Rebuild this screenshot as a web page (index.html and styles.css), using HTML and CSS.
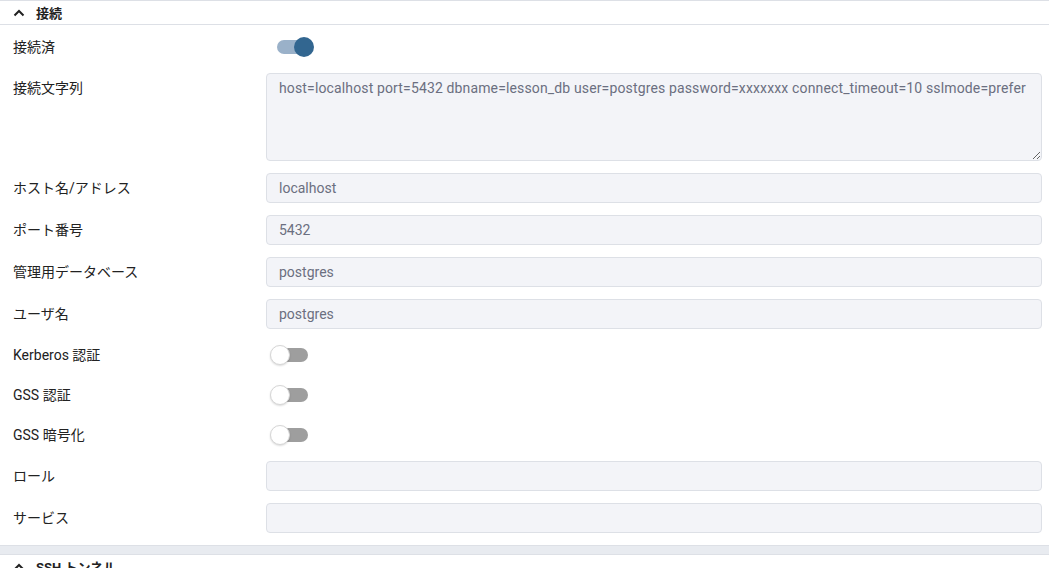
FILE: index.html
```html
<!DOCTYPE html>
<html lang="ja">
<head>
    <meta charset="UTF-8">
    <meta name="viewport" content="width=device-width, initial-scale=1.0">
    <title>接続</title>
    <link rel="stylesheet" href="styles.css">
</head>
<body>
    <!-- 接続 section -->
    <div class="section">
        <div class="section-header">
            <svg class="chevron" width="12" height="8" viewBox="0 0 12 8"><polyline points="1.5,6.5 6,2 10.5,6.5" fill="none" stroke="#222" stroke-width="2"/></svg>
            <span>接続</span>
        </div>

        <div class="form">
            <div class="row row-toggle">
                <label class="label">接続済</label>
                <div class="switch on"><span class="track"></span><span class="knob"></span></div>
            </div>

            <div class="row">
                <label class="label">接続文字列</label>
                <textarea class="field area" readonly>host=localhost port=5432 dbname=lesson_db user=postgres password=xxxxxxx connect_timeout=10 sslmode=prefer</textarea>
            </div>

            <div class="row">
                <label class="label">ホスト名/アドレス</label>
                <input class="field" type="text" value="localhost" readonly>
            </div>

            <div class="row">
                <label class="label">ポート番号</label>
                <input class="field" type="text" value="5432" readonly>
            </div>

            <div class="row">
                <label class="label">管理用データベース</label>
                <input class="field" type="text" value="postgres" readonly>
            </div>

            <div class="row">
                <label class="label">ユーザ名</label>
                <input class="field" type="text" value="postgres" readonly>
            </div>

            <div class="row row-toggle">
                <label class="label">Kerberos 認証</label>
                <div class="switch"><span class="track"></span><span class="knob"></span></div>
            </div>

            <div class="row row-toggle">
                <label class="label">GSS 認証</label>
                <div class="switch"><span class="track"></span><span class="knob"></span></div>
            </div>

            <div class="row row-toggle">
                <label class="label">GSS 暗号化</label>
                <div class="switch"><span class="track"></span><span class="knob"></span></div>
            </div>

            <div class="row">
                <label class="label">ロール</label>
                <input class="field" type="text" value="" readonly>
            </div>

            <div class="row">
                <label class="label">サービス</label>
                <input class="field" type="text" value="" readonly>
            </div>
        </div>
    </div>

    <div class="divider"></div>

    <!-- SSH トンネル section -->
    <div class="section">
        <div class="section-header">
            <svg class="chevron" width="12" height="8" viewBox="0 0 12 8"><polyline points="1.5,6.5 6,2 10.5,6.5" fill="none" stroke="#222" stroke-width="2"/></svg>
            <span>SSH トンネル</span>
        </div>
    </div>
</body>
</html>
```

FILE: styles.css
```css
html, body {
    overflow: hidden;
}

body {
    font-family: Roboto, "Noto Sans CJK JP", sans-serif;
    font-size: 14px;
    color: #222;
    margin: 0;
    padding: 0;
    background-color: #fff;
}

.section {
    border-top: 1px solid #dde0e6;
}

.section-header {
    display: flex;
    align-items: center;
    gap: 11px;
    height: 23px;
    padding-left: 13px;
    font-size: 13px;
    font-weight: bold;
    border-bottom: 1px solid #dde0e6;
}

.chevron {
    display: block;
}

.form {
    display: flex;
    flex-direction: column;
    gap: 12px;
    padding: 8px 7px 12px 13px;
}

.row {
    display: grid;
    grid-template-columns: 253px 1fr;
    align-items: start;
}

.label {
    line-height: 30px;
}

.row-toggle {
    align-items: center;
    height: 28px;
}

.row-toggle .label {
    line-height: 28px;
}

.field {
    box-sizing: border-box;
    width: 100%;
    height: 30px;
    margin: 0;
    padding: 0 12px;
    font-family: inherit;
    font-size: 14px;
    color: #6b6f80;
    background-color: #f3f4f8;
    border: 1px solid #dde0e6;
    border-radius: 4px;
    outline: none;
}

.area {
    height: 88px;
    padding: 5px 12px;
    line-height: 18px;
    letter-spacing: 0.14px;
    resize: vertical;
}

.switch {
    position: relative;
    width: 44px;
    height: 20px;
    margin-left: 4px;
}

.track {
    position: absolute;
    left: 7px;
    top: 3px;
    width: 31px;
    height: 14px;
    border-radius: 7px;
    background-color: #9e9e9e;
}

.knob {
    position: absolute;
    left: 0;
    top: 0;
    box-sizing: border-box;
    width: 20px;
    height: 20px;
    border-radius: 50%;
    background-color: #fff;
    border: 1px solid #d6d6d6;
    box-shadow: 0 1px 2px rgba(0, 0, 0, 0.15);
}

.switch.on .track {
    background-color: #9ab1c9;
}

.switch.on .knob {
    left: 24px;
    background-color: #326690;
    border: none;
    box-shadow: none;
}

.divider {
    height: 8px;
    background-color: #e8ebf0;
    border-top: 1px solid #dde0e6;
}
```
